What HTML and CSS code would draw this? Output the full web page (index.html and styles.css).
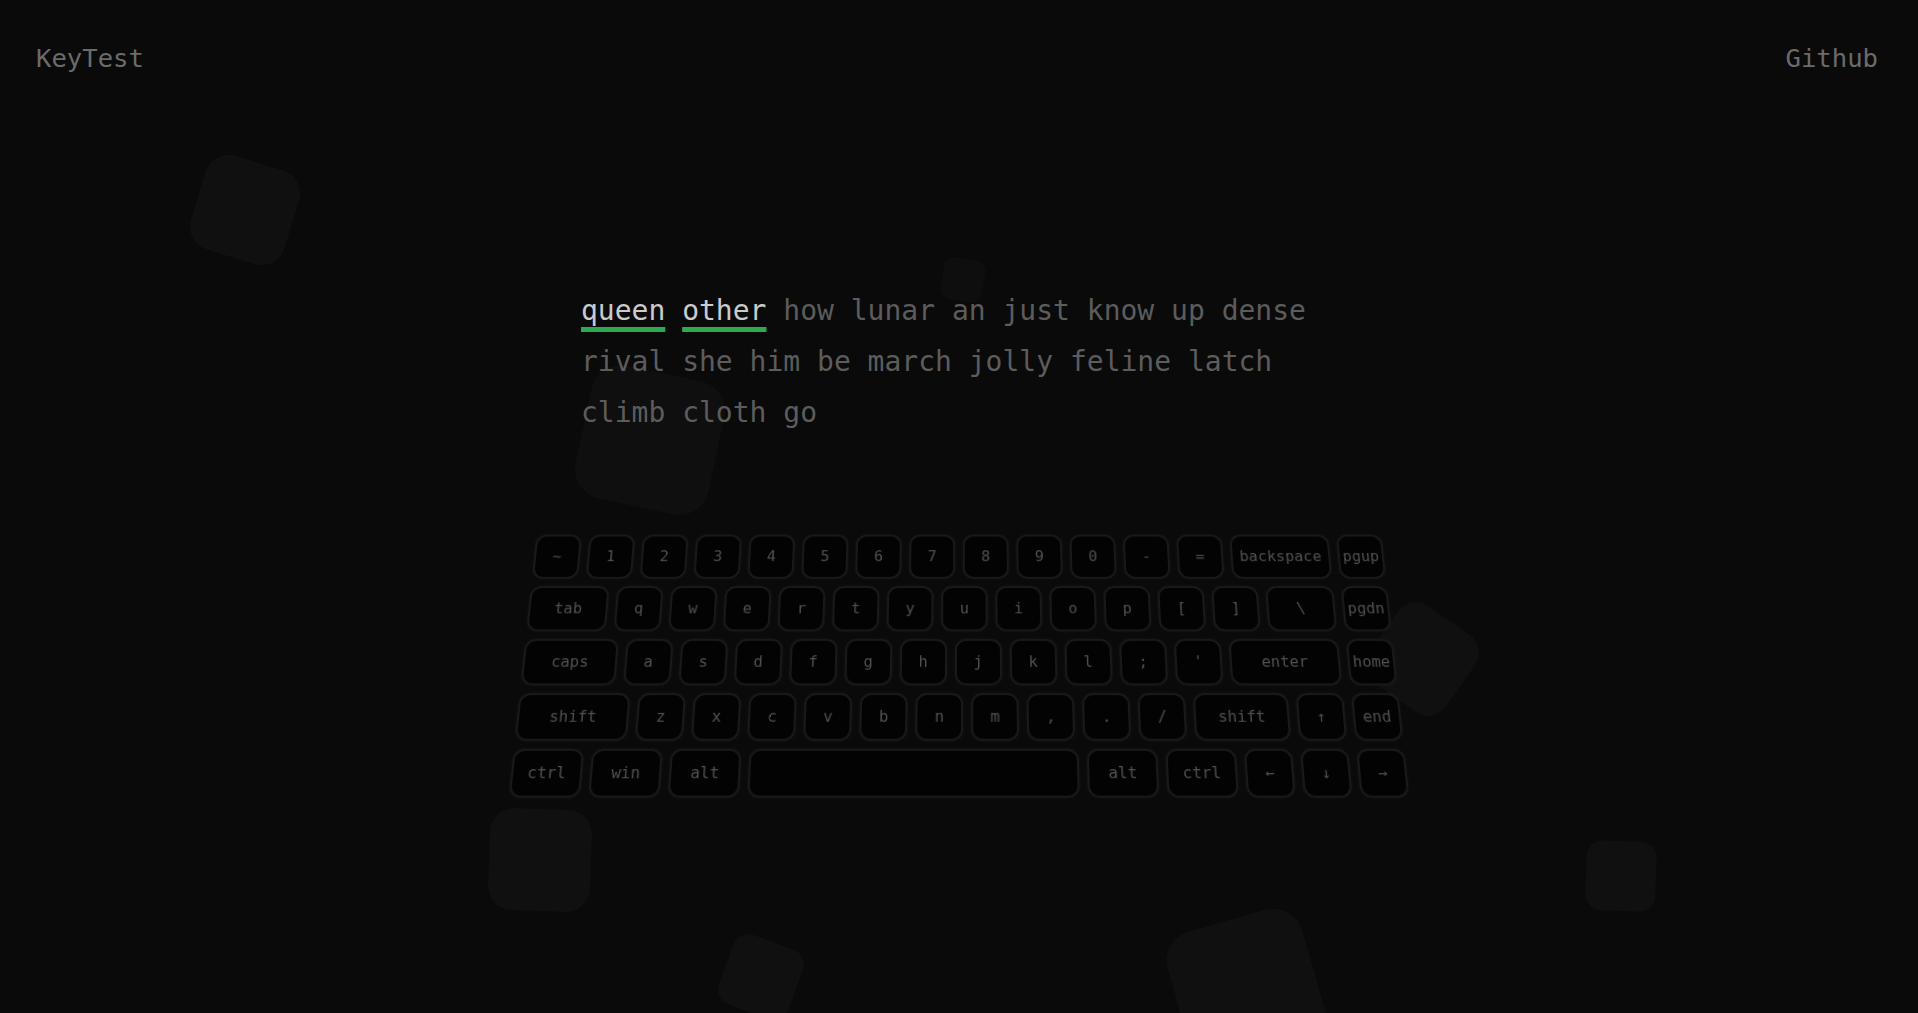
FILE: index.html
```html
<!DOCTYPE html>
<html lang="en">
<head>
<meta charset="utf-8">
<title>KeyTest</title>
<link rel="stylesheet" href="styles.css">
</head>
<body>
<div class="bg">
  <span class="shape s1"></span>
  <span class="shape s2"></span>
  <span class="shape s3"></span>
  <span class="shape s4"></span>
  <span class="shape s5"></span>
  <span class="shape s6"></span>
  <span class="shape s7"></span>
  <span class="shape s8"></span>
</div>
<header class="top">
  <span class="brand">KeyTest</span>
  <a class="gh" href="#">Github</a>
</header>
<main class="main">
  <div class="words">
    <span class="w done">queen</span>
    <span class="w done">other</span>
    <span class="w">how</span>
    <span class="w">lunar</span>
    <span class="w">an</span>
    <span class="w">just</span>
    <span class="w">know</span>
    <span class="w">up</span>
    <span class="w">dense</span>
    <span class="w">rival</span>
    <span class="w">she</span>
    <span class="w">him</span>
    <span class="w">be</span>
    <span class="w">march</span>
    <span class="w">jolly</span>
    <span class="w">feline</span>
    <span class="w">latch</span>
    <span class="w">climb</span>
    <span class="w">cloth</span>
    <span class="w">go</span>
  </div>
  <div class="kb-wrap">
    <div class="kb">
      <div class="row">
        <div class="key">~</div><div class="key">1</div><div class="key">2</div><div class="key">3</div><div class="key">4</div><div class="key">5</div><div class="key">6</div><div class="key">7</div><div class="key">8</div><div class="key">9</div><div class="key">0</div><div class="key">-</div><div class="key">=</div><div class="key u2">backspace</div><div class="key">pgup</div>
      </div>
      <div class="row">
        <div class="key u16">tab</div><div class="key">q</div><div class="key">w</div><div class="key">e</div><div class="key">r</div><div class="key">t</div><div class="key">y</div><div class="key">u</div><div class="key">i</div><div class="key">o</div><div class="key">p</div><div class="key">[</div><div class="key">]</div><div class="key u14">\</div><div class="key">pgdn</div>
      </div>
      <div class="row">
        <div class="key u185">caps</div><div class="key">a</div><div class="key">s</div><div class="key">d</div><div class="key">f</div><div class="key">g</div><div class="key">h</div><div class="key">j</div><div class="key">k</div><div class="key">l</div><div class="key">;</div><div class="key">'</div><div class="key u215">enter</div><div class="key">home</div>
      </div>
      <div class="row">
        <div class="key u215">shift</div><div class="key">z</div><div class="key">x</div><div class="key">c</div><div class="key">v</div><div class="key">b</div><div class="key">n</div><div class="key">m</div><div class="key">,</div><div class="key">.</div><div class="key">/</div><div class="key u185">shift</div><div class="key arr">↑</div><div class="key">end</div>
      </div>
      <div class="row">
        <div class="key u14">ctrl</div><div class="key u14">win</div><div class="key u14">alt</div><div class="key u6"></div><div class="key u14">alt</div><div class="key u14">ctrl</div><div class="key arr">←</div><div class="key arr">↓</div><div class="key arr">→</div>
      </div>
    </div>
  </div>
</main>
</body>
</html>
```

FILE: styles.css
```css
html, body {
  margin: 0;
  padding: 0;
}

html {
  overflow: hidden;
}

body {
  background: #0a0a0a;
  height: 1013px;
  overflow: hidden;
  position: relative;
  font-family: "DejaVu Sans Mono", "Liberation Mono", monospace;
  color: #6b6b6b;
}

.bg {
  position: absolute;
  inset: 0;
  z-index: 0;
  overflow: hidden;
  pointer-events: none;
}

.shape {
  position: absolute;
  background: #101010;
  border-radius: 22px;
}

.s1 { left: 196px; top: 161px; width: 98px; height: 98px; border-radius: 24px; transform: rotate(17deg); }
.s2 { left: 942px; top: 259px; width: 42px; height: 42px; border-radius: 10px; transform: rotate(10deg); background: #0e0e0e; }
.s3 { left: 582px; top: 372px; width: 136px; height: 136px; border-radius: 30px; transform: rotate(12deg); background: #0f0f0f; }
.s4 { left: 1375px; top: 612px; width: 94px; height: 94px; transform: rotate(35deg); }
.s5 { left: 489px; top: 809px; width: 102px; height: 102px; border-radius: 24px; transform: rotate(2deg); }
.s6 { left: 724px; top: 940px; width: 74px; height: 74px; border-radius: 16px; transform: rotate(20deg); }
.s7 { left: 1176px; top: 918px; width: 140px; height: 140px; border-radius: 30px; transform: rotate(-16deg); }
.s8 { left: 1586px; top: 841px; width: 70px; height: 70px; border-radius: 16px; transform: rotate(2deg); }

.top {
  position: relative;
  z-index: 1;
  display: flex;
  justify-content: space-between;
  align-items: center;
  padding: 43px 40px 0 36px;
  font-size: 25.6px;
  line-height: 30px;
}

.brand {
  color: #6b6b6b;
}

.gh {
  color: #6b6b6b;
  text-decoration: none;
}

.main {
  position: relative;
  z-index: 1;
}

.words {
  width: 756px;
  margin: 212px auto 0;
  font-size: 28px;
  line-height: 51px;
  color: #5c5c5c;
}

.w.done {
  color: #cbcbcb;
  text-decoration: underline;
  text-decoration-color: #2eaa4e;
  text-decoration-thickness: 5px;
  text-underline-offset: 7px;
  text-decoration-skip-ink: none;
}

.kb-wrap {
  display: flex;
  justify-content: center;
  margin-top: 88px;
}

.kb {
  display: flex;
  flex-direction: column;
  gap: 8px;
  transform: perspective(1100px) rotateX(15deg);
  transform-origin: 50% 50%;
}

.row {
  display: flex;
  gap: 8px;
}

.key {
  box-sizing: border-box;
  width: 47px;
  height: 48px;
  flex: none;
  display: flex;
  align-items: center;
  justify-content: center;
  background: #030303;
  border: 2px solid #191919;
  border-radius: 11px;
  box-shadow: 0 0 3px rgba(255, 255, 255, 0.035);
  color: #505050;
  font-size: 15.5px;
  white-space: nowrap;
  overflow: visible;
}

.key.arr {
  font-size: 15px;
}

.u14 { width: 69px; }
.u16 { width: 80px; }
.u185 { width: 93.75px; }
.u2 { width: 102px; }
.u215 { width: 110.25px; }
.u6 { width: 322px; }
```
